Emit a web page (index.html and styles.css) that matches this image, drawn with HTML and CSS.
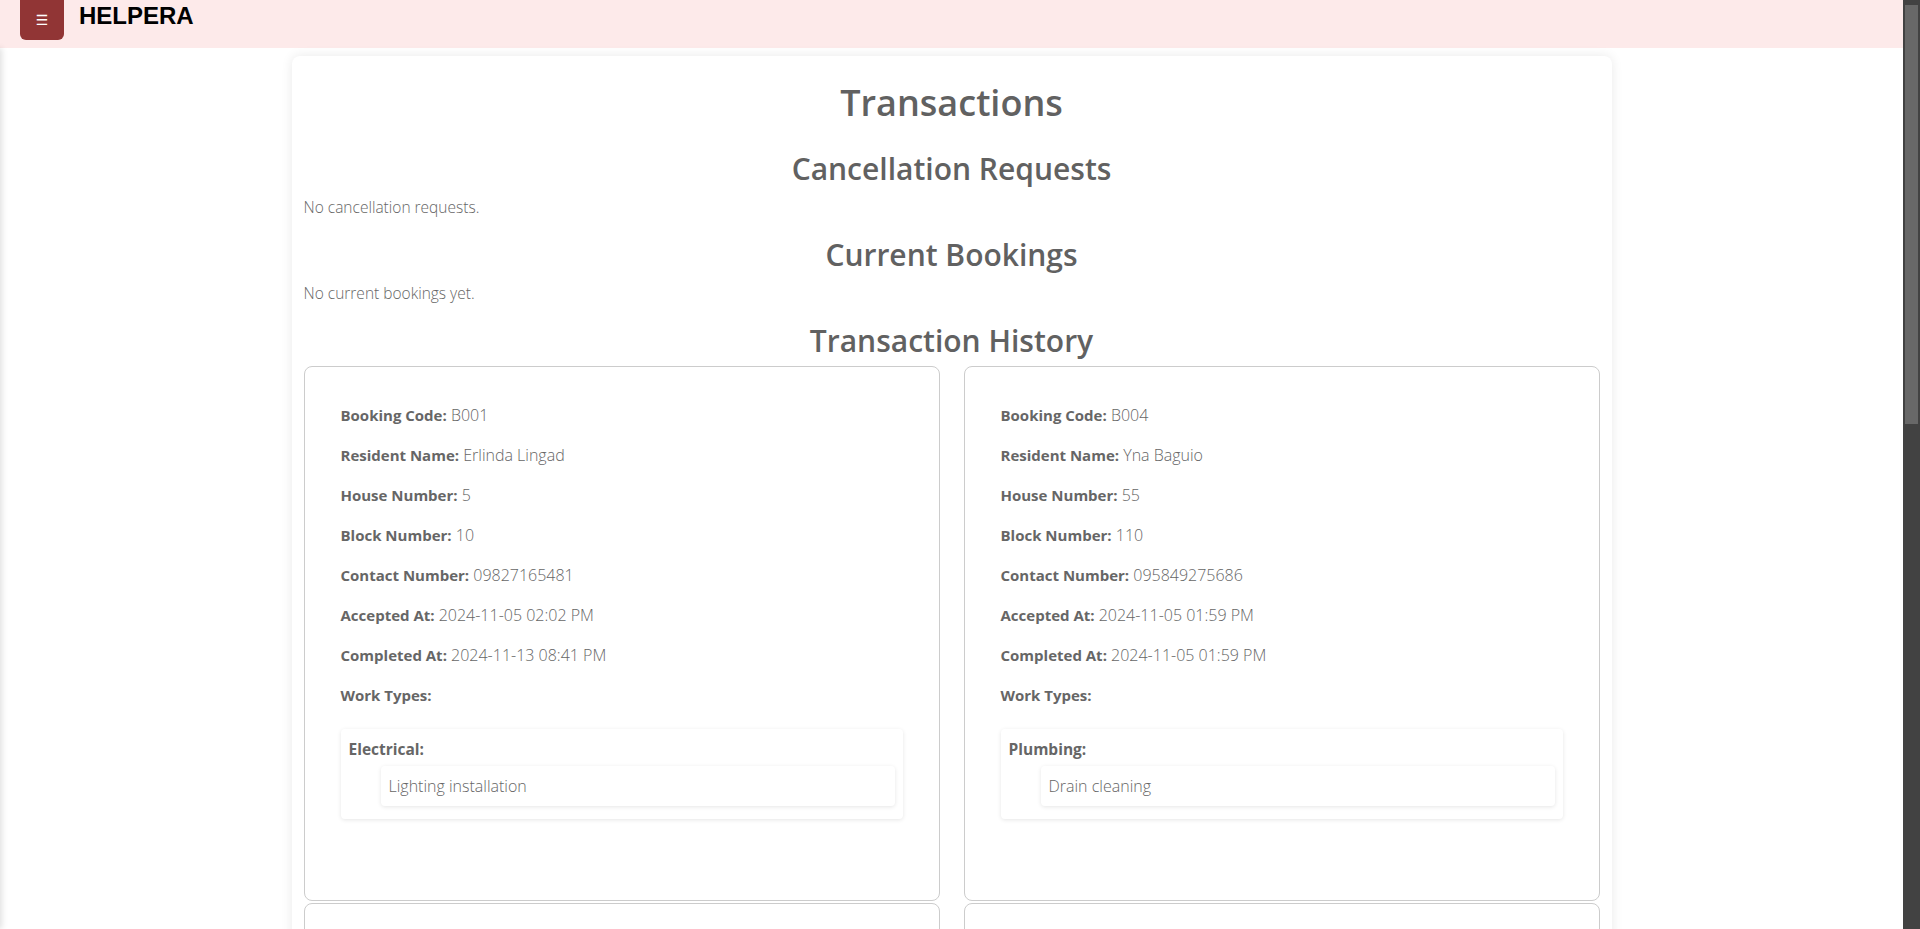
FILE: index.html
```html
<!DOCTYPE html>
<html lang="en">
<head>
<meta charset="utf-8">
<title>HELPERA - Transactions</title>
<link rel="stylesheet" href="styles.css">
</head>
<body>
<aside class="sidebar"></aside>
<div class="scrollbar"><div class="scrollbar-thumb"></div></div>
<header class="topbar">
  <button class="menu-btn" type="button">&#9776;</button>
  <span class="brand">HELPERA</span>
</header>
<main class="container">
  <h1 class="page-title">Transactions</h1>

  <h2 class="section-title">Cancellation Requests</h2>
  <p class="empty">No cancellation requests.</p>

  <h2 class="section-title">Current Bookings</h2>
  <p class="empty">No current bookings yet.</p>

  <h2 class="section-title">Transaction History</h2>
  <div class="history-grid">
    <div class="card">
      <p><strong>Booking Code:</strong> B001</p>
      <p><strong>Resident Name:</strong> Erlinda Lingad</p>
      <p><strong>House Number:</strong> 5</p>
      <p><strong>Block Number:</strong> 10</p>
      <p><strong>Contact Number:</strong> 09827165481</p>
      <p><strong>Accepted At:</strong> 2024-11-05 02:02 PM</p>
      <p><strong>Completed At:</strong> 2024-11-13 08:41 PM</p>
      <p><strong>Work Types:</strong></p>
      <div class="work-box">
        <div class="work-cat">Electrical:</div>
        <ul class="work-list"><li>Lighting installation</li></ul>
      </div>
    </div>
    <div class="card">
      <p><strong>Booking Code:</strong> B004</p>
      <p><strong>Resident Name:</strong> Yna Baguio</p>
      <p><strong>House Number:</strong> 55</p>
      <p><strong>Block Number:</strong> 110</p>
      <p><strong>Contact Number:</strong> 095849275686</p>
      <p><strong>Accepted At:</strong> 2024-11-05 01:59 PM</p>
      <p><strong>Completed At:</strong> 2024-11-05 01:59 PM</p>
      <p><strong>Work Types:</strong></p>
      <div class="work-box">
        <div class="work-cat">Plumbing:</div>
        <ul class="work-list"><li>Drain cleaning</li></ul>
      </div>
    </div>
    <div class="card">
      <p><strong>Booking Code:</strong> B002</p>
      <p><strong>Resident Name:</strong> Erlinda Lingad</p>
      <p><strong>House Number:</strong> 5</p>
      <p><strong>Block Number:</strong> 10</p>
      <p><strong>Contact Number:</strong> 09827165481</p>
      <p><strong>Accepted At:</strong> 2024-11-05 02:10 PM</p>
      <p><strong>Completed At:</strong> 2024-11-13 08:45 PM</p>
      <p><strong>Work Types:</strong></p>
      <div class="work-box">
        <div class="work-cat">Electrical:</div>
        <ul class="work-list"><li>Outlet repair</li></ul>
      </div>
    </div>
    <div class="card">
      <p><strong>Booking Code:</strong> B005</p>
      <p><strong>Resident Name:</strong> Yna Baguio</p>
      <p><strong>House Number:</strong> 55</p>
      <p><strong>Block Number:</strong> 110</p>
      <p><strong>Contact Number:</strong> 095849275686</p>
      <p><strong>Accepted At:</strong> 2024-11-05 02:05 PM</p>
      <p><strong>Completed At:</strong> 2024-11-05 02:06 PM</p>
      <p><strong>Work Types:</strong></p>
      <div class="work-box">
        <div class="work-cat">Plumbing:</div>
        <ul class="work-list"><li>Leak repair</li></ul>
      </div>
    </div>
    <div class="card">
      <p><strong>Booking Code:</strong> B003</p>
      <p><strong>Resident Name:</strong> Erlinda Lingad</p>
      <p><strong>House Number:</strong> 5</p>
      <p><strong>Block Number:</strong> 10</p>
      <p><strong>Contact Number:</strong> 09827165481</p>
      <p><strong>Accepted At:</strong> 2024-11-05 02:15 PM</p>
      <p><strong>Completed At:</strong> 2024-11-13 08:50 PM</p>
      <p><strong>Work Types:</strong></p>
      <div class="work-box">
        <div class="work-cat">Carpentry:</div>
        <ul class="work-list"><li>Door repair</li></ul>
      </div>
    </div>
  </div>
</main>
</body>
</html>
```
FILE: styles.css
```css
body {
  margin: 0 17px 0 0;
  background: #ffffff;
  font-family: "Open Sans", "Noto Sans", sans-serif;
  color: #666666;
}

.scrollbar {
  position: fixed;
  top: 0;
  right: 0;
  bottom: 0;
  width: 17px;
  background: #424242;
  z-index: 10;
}

.scrollbar-thumb {
  margin: 5px 2px 0;
  height: 419px;
  background: #686868;
}

.sidebar {
  position: fixed;
  top: 48px;
  left: -250px;
  width: 250px;
  bottom: 0;
  background: #ffffff;
  box-shadow: 2px 0 6px rgba(0, 0, 0, 0.12);
}

.topbar {
  height: 48px;
  background: #fdeaea;
  display: flex;
  align-items: flex-start;
  padding: 0 20px;
  box-sizing: border-box;
}

.menu-btn {
  width: 44px;
  height: 40px;
  border: 0;
  border-radius: 0 0 6px 6px;
  background: #913535;
  color: #ffffff;
  font-size: 14px;
  line-height: 40px;
  padding: 0;
  font-family: "DejaVu Sans", sans-serif;
}

.brand {
  margin-left: 15px;
  font-family: "Liberation Sans", Arial, sans-serif;
  font-weight: 700;
  font-size: 24px;
  line-height: 32px;
  color: #000000;
}

.container {
  max-width: 1320px;
  margin: 8px auto 40px;
  padding: 12px 12px 20px;
  box-sizing: border-box;
  background: #ffffff;
  border-radius: 8px;
  box-shadow: 0 0 12px rgba(0, 0, 0, 0.09);
}

.page-title {
  margin: 13px 0 24px;
  text-align: center;
  font-size: 36px;
  font-weight: 600;
  line-height: 44px;
  color: #616161;
}

.section-title {
  margin: 0;
  text-align: center;
  font-size: 30px;
  font-weight: 600;
  line-height: 40px;
  color: #616161;
}

.empty {
  margin: 8px 0 18px;
  font-size: 15.5px;
  font-weight: 300;
  line-height: 20px;
}

.history-grid {
  display: grid;
  grid-template-columns: 1fr 1fr;
  column-gap: 24px;
  row-gap: 2px;
  margin-top: 5px;
}

.card {
  min-height: 535px;
  box-sizing: border-box;
  border: 1px solid #cccccc;
  border-radius: 8px;
  padding: 20px 36px;
}

.card p {
  margin: 16px 0;
  font-size: 16px;
  line-height: 24px;
  font-weight: 300;
}

.card strong {
  font-size: 15px;
  font-weight: 700;
}

.work-box {
  margin-top: 22px;
  padding: 8px 8px 13px;
  border-radius: 4px;
  box-shadow: 0 1px 4px rgba(0, 0, 0, 0.1);
}

.work-cat {
  font-weight: 700;
  font-size: 15.5px;
  line-height: 20px;
  margin-top: 2px;
}

.work-list {
  list-style: none;
  margin: 7px 0 0;
  padding: 0 0 0 32px;
}

.work-list li {
  padding: 8px;
  font-size: 16px;
  font-weight: 300;
  line-height: 24px;
  border-radius: 4px;
  box-shadow: 0 1px 4px rgba(0, 0, 0, 0.1);
}
```
